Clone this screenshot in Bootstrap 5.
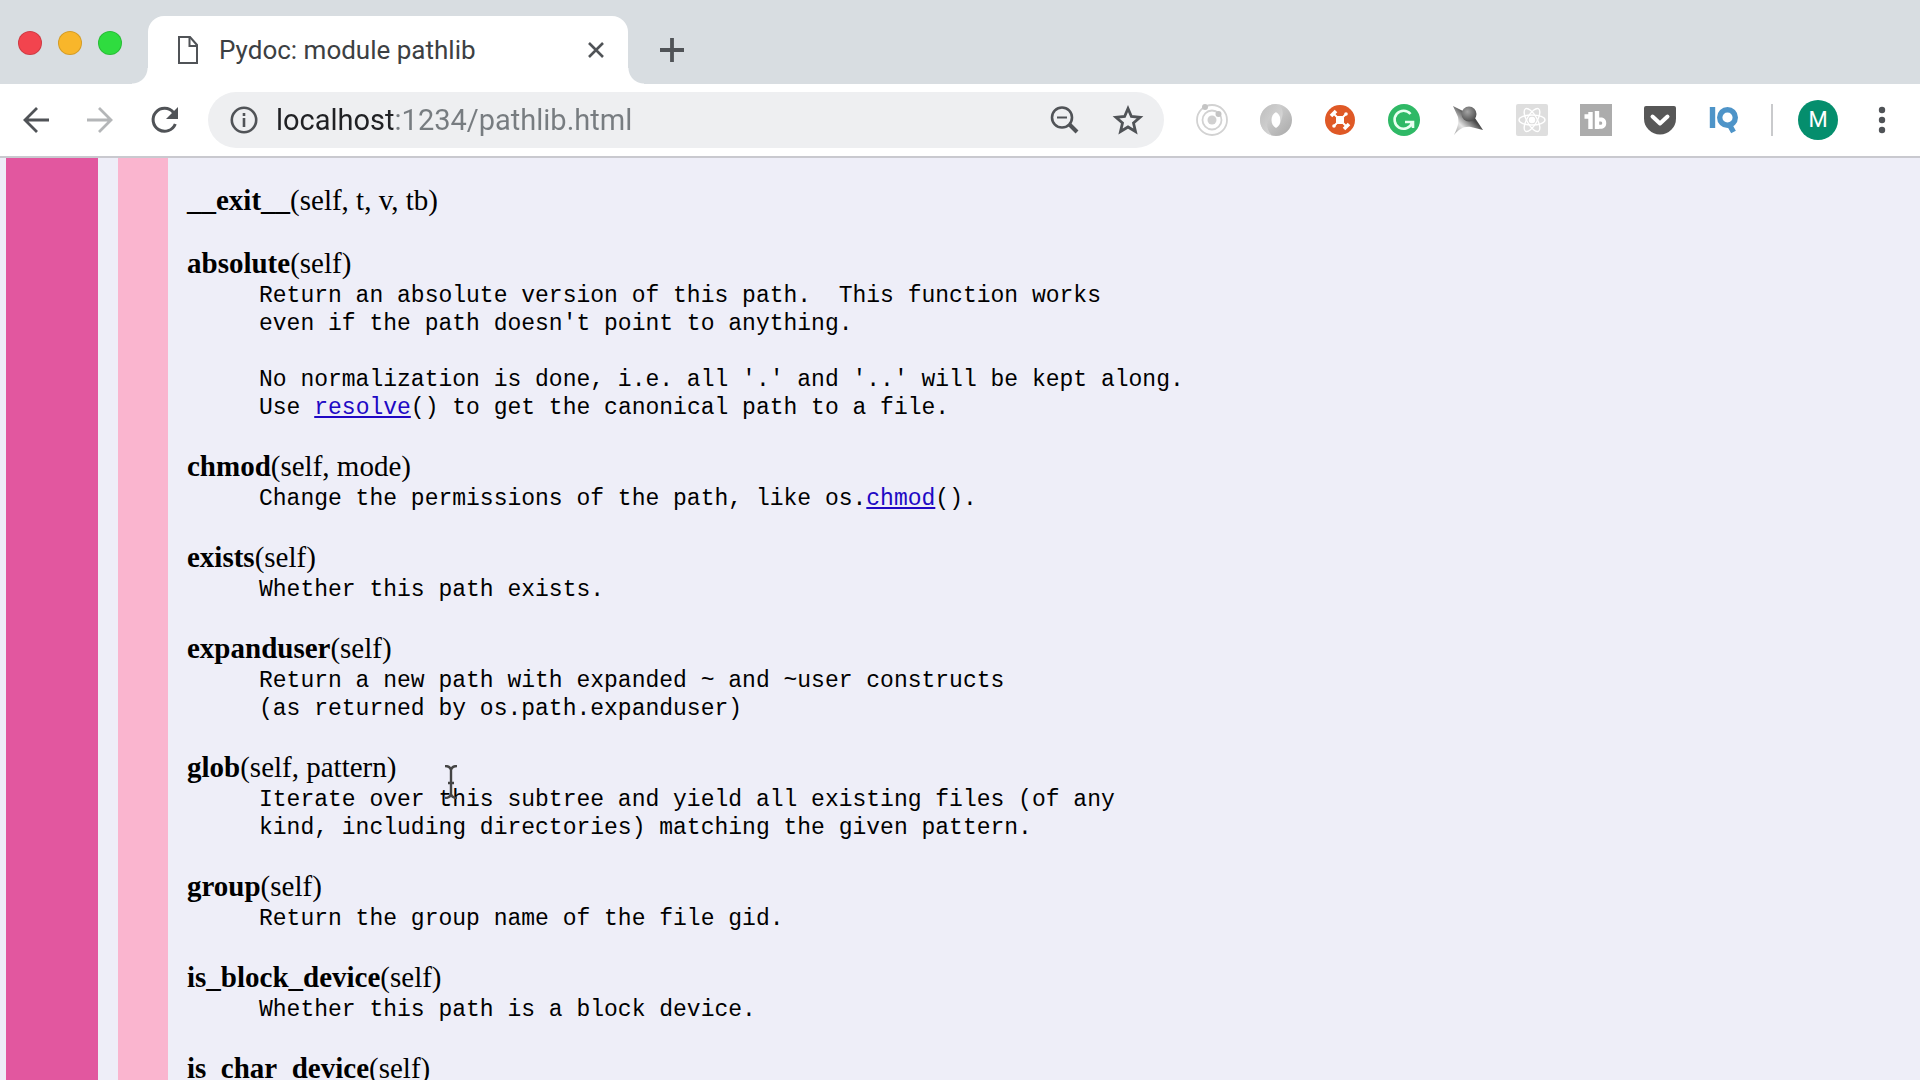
<!DOCTYPE html>
<html lang="en">
<head>
<meta charset="utf-8">
<meta name="viewport" content="width=device-width, initial-scale=1">
<title>Pydoc: module pathlib</title>
<link href="https://cdn.jsdelivr.net/npm/bootstrap@5.3.0/dist/css/bootstrap.min.css" rel="stylesheet">
<style>
  body { background: #eeeef8; color: #000; }
  svg { display: block; }
  .chrome-font { font-family: Roboto, "Liberation Sans", sans-serif; }
  .tab-strip { background: #d8dde1; height: 84px; padding-left: 18px; }
  .light { width: 24px; height: 24px; border: 1px solid rgba(0,0,0,.14); }
  .light-group { gap: 16px; height: 54px; margin: 16px 26px 0 0; }
  .light-close { background: #f2444e; }
  .light-min { background: #f8b62b; }
  .light-max { background: #2fdc3f; }
  .page-tab { width: 480px; height: 68px; background: #fff; border-radius: 16px 16px 0 0; padding: 0 24px 0 30px; position: relative; }
  .page-tab::before, .page-tab::after { content: ""; position: absolute; bottom: 0; width: 16px; height: 16px; }
  .page-tab::before { left: -16px; background: radial-gradient(circle at 0 0, transparent 15px, #fff 16px); }
  .page-tab::after { right: -16px; background: radial-gradient(circle at 100% 0, transparent 15px, #fff 16px); }
  .tab-title { font-size: 26px; line-height: 32px; color: #3c4043; margin-left: 21px; }
  .plain-btn { border: 0; background: transparent; padding: 0; color: #505357; }
  .new-tab { margin: 16px 0 0 32px; height: 68px; }
  .tool-bar { background: #fff; height: 74px; padding: 0 30px 0 20px; border-bottom: 2px solid #c9c9cf; }
  .nav-group { gap: 32px; margin-right: 28px; }
  .dim { color: #b4b6b8; }
  .omnibox { height: 56px; background: #eeeff1; border-radius: 28px; padding: 0 20px; gap: 16px; color: #505357; }
  .url-field { border: 0; outline: 0; padding: 0; min-width: 0; font-size: 29px; line-height: 40px; color: #777c80;
    background: linear-gradient(90deg, #202124 119px, #777c80 119px); -webkit-background-clip: text; background-clip: text; -webkit-text-fill-color: transparent; }
  .ext-group { gap: 32px; margin-left: 32px; }
  .rule { width: 2px; height: 32px; background: #c9cacc; margin: 0 25px 0 31px; }
  .avatar { width: 40px; height: 40px; background: #058e6d; color: #fff; font-size: 22px; line-height: 40px; margin-right: 36px; }
  .doc-view { padding-left: 6px; }
  .strip-outer { width: 92px; background: #e2579f; margin-right: 20px; }
  .strip-inner { width: 50px; background: #fab5cf; margin-right: 19px; }
  .doc-list { padding-top: 25px; font-family: "Liberation Serif", serif; }
  .doc-list dl { margin: 0 0 27px; }
  .doc-list dt { font-size: 29px; line-height: 34px; padding-bottom: 2px; font-weight: 400; }
  .doc-list dt strong { font-weight: 700; }
  .doc-list dd { margin: 0 0 0 72px; font-family: "Liberation Mono", monospace; font-size: 23px; line-height: 28px; white-space: pre; }
  .doc-list a { color: #2008c4; }
  .pointer { position: absolute; left: 444px; top: 607px; }
</style>
</head>
<body>
<div class="vh-100 d-flex flex-column overflow-hidden">
  <header class="chrome-font flex-shrink-0">
    <div class="tab-strip d-flex align-items-start">
      <div class="light-group d-flex align-items-center">
        <span class="light light-close rounded-circle"></span>
        <span class="light light-min rounded-circle"></span>
        <span class="light light-max rounded-circle"></span>
      </div>
      <div class="page-tab d-flex align-items-center mt-3">
        <svg width="20" height="28" viewBox="0 0 20 28" fill="none" stroke="#505357" stroke-width="2"><path d="M1 1h11l7 8v18H1z"/><path d="M11.500 1v9H19" /></svg>
        <span class="tab-title flex-grow-1">Pydoc: module pathlib</span>
        <button class="plain-btn" type="button" aria-label="Close tab"><svg width="16" height="16" viewBox="0 0 16 16" stroke="currentColor" stroke-width="2.600"><path d="M1 1l14 14M15 1L1 15"/></svg></button>
      </div>
      <button class="plain-btn new-tab" type="button" aria-label="New tab"><svg width="24" height="24" viewBox="0 0 24 24" stroke="currentColor" stroke-width="3.800"><path d="M12 0v24M0 12h24"/></svg></button>
    </div>
    <div class="tool-bar d-flex align-items-center">
      <div class="nav-group d-flex">
        <button class="plain-btn" type="button" aria-label="Back"><svg width="32" height="32" viewBox="0 0 32 32" fill="none" stroke="currentColor" stroke-width="2.800"><path d="M29 16H5M17 4L5 16l12 12"/></svg></button>
        <button class="plain-btn dim" type="button" aria-label="Forward"><svg width="32" height="32" viewBox="0 0 32 32" fill="none" stroke="currentColor" stroke-width="2.800"><path d="M3 16h24M15 4l12 12-12 12"/></svg></button>
        <button class="plain-btn" type="button" aria-label="Reload"><svg width="32" height="32" viewBox="0 0 32 32"><path d="M25.500 8.500A11.500 11.500 0 1 0 27.300 20" fill="none" stroke="currentColor" stroke-width="3"/><path d="M30 3v12H18z" fill="currentColor"/></svg></button>
      </div>
      <div class="omnibox d-flex align-items-center flex-grow-1">
        <svg width="32" height="32" viewBox="0 0 32 32" fill="none" stroke="currentColor" stroke-width="2.600"><circle cx="16" cy="16" r="12.200"/><path d="M16 14v9M16 9v3"/></svg>
        <input class="url-field chrome-font flex-grow-1" type="text" value="localhost:1234/pathlib.html" aria-label="Address">
        <button class="plain-btn" type="button" aria-label="Zoom"><svg width="32" height="32" viewBox="0 0 32 32" fill="none" stroke="currentColor"><circle cx="14" cy="13.500" r="10" stroke-width="2.600"/><path d="M9 13.500h10" stroke-width="2"/><path d="M21 20l8 8" stroke-width="4"/></svg></button>
        <button class="plain-btn ms-3" type="button" aria-label="Bookmark"><svg width="32" height="32" viewBox="0 0 32 32" fill="none" stroke="currentColor" stroke-width="2.800"><path d="M16 4.500l3.400 8 8.600.8-6.500 5.700 2 8.500L16 23l-7.500 4.500 2-8.500L4 13.300l8.600-.8z"/></svg></button>
      </div>
      <div class="ext-group d-flex">
        <svg width="32" height="32" viewBox="0 0 32 32" fill="none" stroke="#d2d2d2" stroke-width="1.800"><circle cx="16" cy="16" r="15"/><circle cx="16" cy="16" r="9.500"/><circle cx="16" cy="16" r="4.500" fill="#d0d0d0" stroke="none"/><circle cx="9" cy="3" r="3" fill="#c4c4c4" stroke="none"/><circle cx="22.500" cy="10" r="3" fill="#c4c4c4" stroke="none"/></svg>
        <svg width="32" height="32" viewBox="0 0 32 32"><defs><linearGradient id="ga" x1="0" y1="0" x2="1" y2="1"><stop offset="0" stop-color="#e0e0e0"/><stop offset="1" stop-color="#a8a8a8"/></linearGradient><linearGradient id="gb" x1="0" y1="0" x2="1" y2="1"><stop offset="0" stop-color="#b2b2b2"/><stop offset="1" stop-color="#ececec"/></linearGradient></defs><path fill-rule="evenodd" d="M16 0a16 16 0 1 1 0 32 16 16 0 0 1 0-32zM16 8c-6 3-6 13 0 16 6-3 6-13 0-16z" fill="url(#ga)"/><path d="M16 0A16 16 0 0 0 12 31.500C4 24 6 11 16 8c4 2 5 6 4.500 10C24 10 24 3 16 0z" fill="url(#gb)" opacity=".75"/></svg>
        <svg width="32" height="32" viewBox="0 0 32 32"><circle cx="16" cy="16" r="15" fill="#df5926"/><g stroke="#fff" fill="none"><path d="M10 10l12 12M22 10L10 22" stroke-width="1.800"/><path d="M7 12l5-5M20 25l5-5" stroke-width="3.600"/></g><rect x="12" y="12" width="8" height="8" rx="2" fill="#fff"/><circle cx="22" cy="10" r="1.800" fill="#fff"/><circle cx="10" cy="22" r="1.800" fill="#fff"/></svg>
        <svg width="32" height="32" viewBox="0 0 32 32"><circle cx="16" cy="16" r="16" fill="#2fb966"/><path d="M22.500 10A9 9 0 1 0 24 19M17 18h8v6" fill="none" stroke="#e8fff0" stroke-width="2.600"/></svg>
        <svg width="32" height="32" viewBox="0 0 32 32"><defs><radialGradient id="gc" cx=".4" cy=".35" r=".7"><stop offset="0" stop-color="#a4a4a4"/><stop offset="1" stop-color="#4c4c4c"/></radialGradient><linearGradient id="gd" x1="0" y1="1" x2="1" y2="0"><stop offset="0" stop-color="#999"/><stop offset=".3" stop-color="#e6e6e6"/><stop offset=".6" stop-color="#4a4a4a"/></linearGradient></defs><path d="M1 2l10 5 12 7 8 12-12-3c-7-1-12 2-17 8 4-8 5-13 4-18z" fill="url(#gd)"/><circle cx="17" cy="10" r="7.500" fill="url(#gc)"/></svg>
        <svg width="32" height="32" viewBox="0 0 32 32" fill="none" stroke="#fff" stroke-width="1.400"><rect width="32" height="32" rx="2" fill="#dedede" stroke="none"/><ellipse cx="16" cy="16" rx="13" ry="5"/><ellipse cx="16" cy="16" rx="13" ry="5" transform="rotate(60 16 16)"/><ellipse cx="16" cy="16" rx="13" ry="5" transform="rotate(120 16 16)"/><circle cx="16" cy="16" r="2.500" fill="#fff"/></svg>
        <svg width="32" height="32" viewBox="0 0 32 32" fill="none" stroke="#fff" stroke-width="4.400"><rect width="32" height="32" fill="#acacac" stroke="none"/><path d="M10.500 8v17M4.500 12.500h8M17 7v18"/><path d="M19 15.500h2.500a3.800 3.800 0 0 1 0 7.300H19" stroke-width="4"/></svg>
        <svg width="32" height="32" viewBox="0 0 32 32"><path d="M2 2h28q2 0 2 2v10.500a16 16 0 0 1-32 0V4q0-2 2-2z" fill="#575757"/><path d="M8.500 12.500l7.500 7 7.500-7" fill="none" stroke="#fff" stroke-width="4" stroke-linecap="round" stroke-linejoin="round"/></svg>
        <svg width="32" height="32" viewBox="0 0 32 32" fill="none" stroke="#4e94c8" stroke-width="5.400"><path d="M4.500 3v21M21 20l4.500 8"/><circle cx="19.500" cy="13.500" r="7.800"/></svg>
      </div>
      <span class="rule"></span>
      <button class="plain-btn avatar rounded-circle text-center" type="button">M</button>
      <button class="plain-btn" type="button" aria-label="Menu"><svg width="16" height="32" viewBox="0 0 16 32" fill="currentColor"><circle cx="8" cy="6" r="3.200"/><circle cx="8" cy="16" r="3.200"/><circle cx="8" cy="26" r="3.200"/></svg></button>
    </div>
  </header>
  <main class="doc-view d-flex flex-grow-1 overflow-hidden position-relative">
    <div class="strip-outer flex-shrink-0"></div>
    <div class="strip-inner flex-shrink-0"></div>
    <div class="doc-list flex-grow-1">
      <dl><dt><strong>__exit__</strong>(self, t, v, tb)</dt></dl>
      <dl><dt><strong>absolute</strong>(self)</dt><dd>Return an absolute version of this path.  This function works
even if the path doesn't point to anything.

No normalization is done, i.e. all '.' and '..' will be kept along.
Use <a href="#resolve">resolve</a>() to get the canonical path to a file.</dd></dl>
      <dl><dt><strong>chmod</strong>(self, mode)</dt><dd>Change the permissions of the path, like os.<a href="#chmod">chmod</a>().</dd></dl>
      <dl><dt><strong>exists</strong>(self)</dt><dd>Whether this path exists.</dd></dl>
      <dl><dt><strong>expanduser</strong>(self)</dt><dd>Return a new path with expanded ~ and ~user constructs
(as returned by os.path.expanduser)</dd></dl>
      <dl><dt><strong>glob</strong>(self, pattern)</dt><dd>Iterate over this subtree and yield all existing files (of any
kind, including directories) matching the given pattern.</dd></dl>
      <dl><dt><strong>group</strong>(self)</dt><dd>Return the group name of the file gid.</dd></dl>
      <dl><dt><strong>is_block_device</strong>(self)</dt><dd>Whether this path is a block device.</dd></dl>
      <dl><dt><strong>is_char_device</strong>(self)</dt></dl>
    </div>
    <svg class="pointer" width="14" height="34" viewBox="0 0 14 34" fill="none" stroke="#444" stroke-width="2.400"><path d="M1 1q5 0 6 4q1-4 6-4M7 5v24M1 33q5 0 6-4q1 4 6 4M4 18h6"/></svg>
  </main>
</div>
<script src="https://cdn.jsdelivr.net/npm/bootstrap@5.3.0/dist/js/bootstrap.bundle.min.js"></script>
</body>
</html>
